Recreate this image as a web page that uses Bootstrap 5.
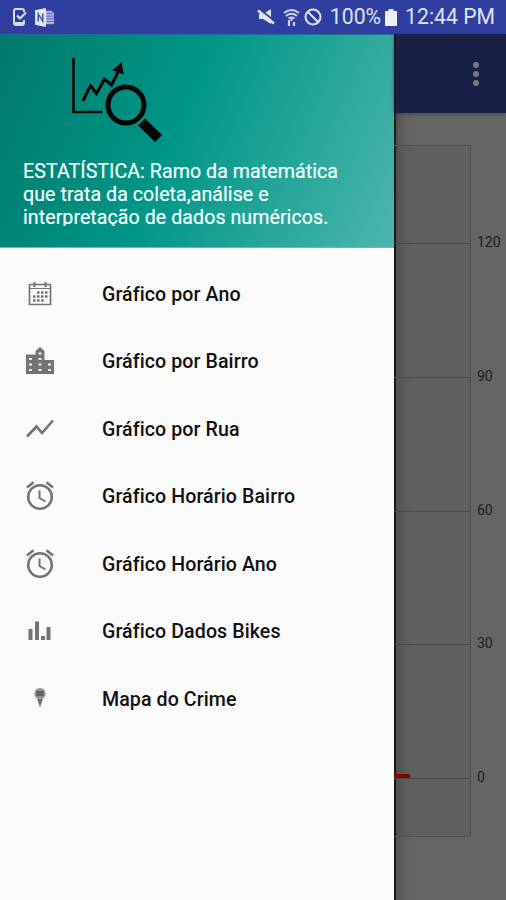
<!DOCTYPE html>
<html lang="pt-BR">
<head>
<meta charset="utf-8">
<meta name="viewport" content="width=device-width, initial-scale=1">
<title>Estatística</title>
<link href="https://cdn.jsdelivr.net/npm/bootstrap@5.3.0/dist/css/bootstrap.min.css" rel="stylesheet">
<style>
body{font-family:Roboto,"Liberation Sans",sans-serif;background:#666;letter-spacing:0}
.screen{width:506px;height:900px}
.statusbar{height:34px;background:#303f9f;color:#dfe2f3;font-size:21.2px;line-height:36px;padding:0 11px 0 13px}
.statusbar svg{display:block}
.drawer{width:394px;background:#fafafa}
.drawer-head{height:214px;background:linear-gradient(113deg,#00796b 0%,#009688 45%,#4db6ac 100%);border-top:1px solid #1c6f96;border-bottom:1px solid #62bdb2;padding:21px 23px 0 23px}
.drawer-head svg{display:block;margin-left:48px}
.about{color:#f4fffd;font-size:19.6px;letter-spacing:.06px;line-height:23px;height:66px;margin-top:15px;-webkit-text-stroke:.2px #f4fffd}
.menu{padding-top:12px}
.entry{height:67.5px;padding-left:26px;gap:48px;color:#111;font-size:19.6px;letter-spacing:.08px;font-weight:500;text-decoration:none}
.entry span{padding-top:1px}
.entry svg{width:28px;height:30px;flex:none;color:#737373}
.behind{width:112px;background:linear-gradient(90deg,rgba(0,0,0,.75) 0 2px,rgba(0,0,0,.17) 2px,rgba(0,0,0,.04) 12px,transparent 22px),#656565}
.appbar{height:79px;background:linear-gradient(90deg,rgba(0,0,0,.5) 0 1px,transparent 2px),#192048;padding-right:27px;box-shadow:0 1px 4px rgba(0,0,0,.3)}
.dots{gap:3px}
.dots span{width:6px;height:6px;border-radius:50%;background:#75797b}
.chart{margin-top:32px}
.plot{width:77px;border:solid #505050;border-width:1px 1px 1px 0;background:rgba(0,0,0,.045)}
.band{height:133.75px;border-bottom:1px solid #494949}
.band-top{height:98px}
.band-end{height:57px}
.axis{font-size:14px;line-height:16px;color:#1d1d1d;padding:89px 0 0 6px}
.axis div{height:133.75px}
.zero{width:16px;height:4px;background:#850000}
</style>
<script src="https://cdn.jsdelivr.net/npm/bootstrap@5.3.0/dist/js/bootstrap.bundle.min.js"></script>
</head>
<body class="m-0 overflow-hidden">
<div class="screen d-flex flex-column overflow-hidden">
  <header class="statusbar d-flex align-items-center justify-content-between">
    <div class="d-flex align-items-center gap-2">
      <svg width="14" height="19" viewBox="0 0 14 19" fill="none" stroke="#d5daf0"><path d="M11 4V2.500Q11 1 9 1H3Q1 1 1 3v12q0 2 2 2h6q2 0 2-2v-3" stroke-width="2"/><path d="M1 15.500h10" stroke-width="3"/><path d="M4 7.500 7 10.500 13 4.500" stroke-width="2.200"/></svg>
      <svg width="20" height="19" viewBox="0 0 22 21"><path d="M11 3h7l3 3v12H11z" fill="#a9b2de"/><path d="M13 6h6M13 9h8M13 12h8M13 15h8" stroke="#5967b5"/><path d="M0 2.500 12 0v21L0 18.500z" fill="#e4e7f5"/><path d="M3.500 15V6.500L8.500 14.500V6" stroke="#4555ab" stroke-width="1.700" fill="none"/></svg>
    </div>
    <div class="d-flex align-items-center">
      <svg width="18" height="18" viewBox="0 0 18 18"><path d="M2 6h4l8-5v15l-8-5H2z" fill="#dfe2f3"/><path d="M2 .5 18 13.500" stroke="#303f9f" stroke-width="1.800"/><path d="M1 2.500 17 15.500" stroke="#dfe2f3" stroke-width="2.400"/></svg>
      <svg class="ms-2" width="17" height="19" viewBox="0 0 17 19" fill="none" stroke="#cbd0eb" stroke-width="1.900"><path d="M1 5q7.500-6 15 0M3 8q5.500-4.500 11 0M5.500 10.500q3-2 6 0"/><path d="M8.500 9v4" stroke-width="2"/><path d="M6 12v6M11 18v-4" stroke-width="2.200"/></svg>
      <svg class="ms-1" width="18" height="18" viewBox="0 0 18 18" fill="none" stroke="#dfe2f3" stroke-width="2"><circle cx="9" cy="9" r="7.500"/><path d="m4 4 10 10"/></svg>
      <span class="ms-1 ps-1">100%</span>
      <svg class="ms-1" width="12" height="17" viewBox="0 0 12 17"><path d="M3.500 0h5v2H12v15H0V2h3.500z" fill="#eceef8"/></svg>
      <span class="ms-2">12:44 PM</span>
    </div>
  </header>
  <div class="d-flex flex-grow-1">
    <aside class="drawer">
      <div class="drawer-head">
        <svg width="95" height="89" viewBox="71 56 95 89" fill="none" stroke="#050505"><path d="M73.500 58v54h29" stroke-width="2.600"/><path d="m83 101 7.500-15.500 6 8L104.500 79l7 6 7-14" stroke-width="3"/><path d="m121.500 62 2.200 12.500-6-2.500-5.500-1.500z" fill="#050505" stroke="none"/><circle cx="126" cy="105" r="18" stroke-width="5"/><path d="m141.500 122 17 16.500" stroke-width="10"/></svg>
        <div class="about overflow-hidden text-nowrap">ESTATÍSTICA: Ramo da matemática<br>que trata da coleta,análise e<br>interpretação de dados numéricos.</div>
      </div>
      <nav class="menu d-flex flex-column">
        <a class="entry d-flex align-items-center"><svg viewBox="0 0 28 30" fill="none" stroke="currentColor"><path d="M3.500 5.500h21v20h-21z" stroke-width="1.700"/><path d="M3 9.500h22" stroke-width="1"/><path d="M8.500 3v5M19.500 3v5" stroke-width="2"/><path d="M11 13.500h12M7 17.500h16M7 21.500h11" stroke-width="2.500" stroke-dasharray="2.500 1.500"/></svg><span>Gráfico por Ano</span></a>
        <a class="entry d-flex align-items-center"><svg viewBox="0 0 28 30"><path d="M0 28V8.500h9.500V5L14 1l4.500 4v9H28v14z" fill="currentColor"/><path d="M3 12h3v2H3zm0 5.500h3v2H3zm0 5.500h3v2H3zM12.500 6.500h3v2h-3zm0 5.500h3v2h-3zm0 5.500h3v2h-3zm0 5.500h3v2h-3zM22 17.500h3v2h-3zm0 5.500h3v2h-3z" fill="#eee"/></svg><span>Gráfico por Bairro</span></a>
        <a class="entry d-flex align-items-center"><svg viewBox="0 0 28 30" fill="none" stroke="currentColor" stroke-width="2.600"><path d="m1 22.500 9.500-10L16 19 27 6.500"/></svg><span>Gráfico por Rua</span></a>
        <a class="entry d-flex align-items-center"><svg viewBox="0 0 28 30" fill="none" stroke="currentColor" stroke-width="2.500"><circle cx="14" cy="16" r="11.800"/><path d="M1 6.500 7.500 1.200M27 6.500 20.500 1.200"/><path d="M13.500 9.500v7.500l6 3.500" stroke-width="2"/></svg><span>Gráfico Horário Bairro</span></a>
        <a class="entry d-flex align-items-center"><svg viewBox="0 0 28 30" fill="none" stroke="currentColor" stroke-width="2.500"><circle cx="14" cy="16" r="11.800"/><path d="M1 6.500 7.500 1.200M27 6.500 20.500 1.200"/><path d="M13.500 9.500v7.500l6 3.500" stroke-width="2"/></svg><span>Gráfico Horário Ano</span></a>
        <a class="entry d-flex align-items-center"><svg viewBox="0 0 28 30"><path d="M2.500 13h4v11h-4zM9 5.500h4V24H9zM15 20h4v4h-4zM20.500 11h4v13h-4z" fill="currentColor"/></svg><span>Gráfico Dados Bikes</span></a>
        <a class="entry d-flex align-items-center"><svg viewBox="0 0 28 30"><circle cx="14" cy="9.500" r="5.600" fill="#929292"/><path d="M10.500 7h7v5h-7z" fill="#5d5d5d"/><path d="M11 15h6L14 23.500z" fill="currentColor"/></svg><span>Mapa do Crime</span></a>
      </nav>
    </aside>
    <main class="behind">
      <div class="appbar d-flex align-items-center justify-content-end">
        <div class="dots d-flex flex-column"><span></span><span></span><span></span></div>
      </div>
      <div class="chart d-flex align-items-start">
        <div class="plot">
          <div class="band band-top"></div>
          <div class="band"></div>
          <div class="band"></div>
          <div class="band"></div>
          <div class="band d-flex align-items-end"><div class="zero"></div></div>
          <div class="band-end"></div>
        </div>
        <div class="axis"><div>120</div><div>90</div><div>60</div><div>30</div><div>0</div></div>
      </div>
    </main>
  </div>
</div>
</body>
</html>
